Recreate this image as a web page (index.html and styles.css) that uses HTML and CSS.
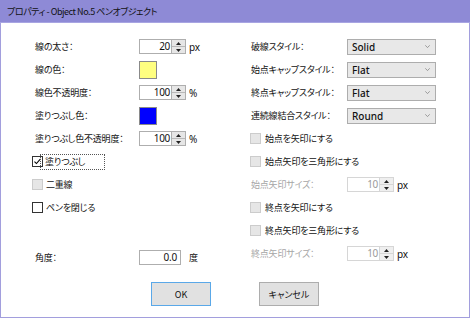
FILE: index.html
```html
<!DOCTYPE html>
<html lang="ja">
<head>
    <meta charset="UTF-8">
    <title>プロパティ - Object No.5 ペンオブジェクト</title>
    <link rel="stylesheet" href="styles.css">
</head>
<body>
<div class="window">
    <div class="titlebar">プロパティ - Object No.5 ペンオブジェクト</div>
    <div class="content">
        <div class="columns">
            <!-- 左側 -->
            <div class="col col-left">
                <div class="row">
                    <span class="label">線の太さ：</span>
                    <span class="spin"><span class="spin-value">20</span><span class="spin-btns"><span class="spin-btn"><svg viewBox="0 0 5 3"><path d="M0 3L2.5 0L5 3Z"/></svg></span><span class="spin-btn"><svg viewBox="0 0 5 3"><path d="M0 0L2.5 3L5 0Z"/></svg></span></span></span>
                    <span class="unit">px</span>
                </div>
                <div class="row">
                    <span class="label">線の色：</span>
                    <span class="swatch swatch-yellow"></span>
                </div>
                <div class="row">
                    <span class="label">線色不透明度：</span>
                    <span class="spin"><span class="spin-value">100</span><span class="spin-btns"><span class="spin-btn"><svg viewBox="0 0 5 3"><path d="M0 3L2.5 0L5 3Z"/></svg></span><span class="spin-btn"><svg viewBox="0 0 5 3"><path d="M0 0L2.5 3L5 0Z"/></svg></span></span></span>
                    <span class="unit">%</span>
                </div>
                <div class="row">
                    <span class="label">塗りつぶし色：</span>
                    <span class="swatch swatch-blue"></span>
                </div>
                <div class="row">
                    <span class="label">塗りつぶし色不透明度：</span>
                    <span class="spin"><span class="spin-value">100</span><span class="spin-btns"><span class="spin-btn"><svg viewBox="0 0 5 3"><path d="M0 3L2.5 0L5 3Z"/></svg></span><span class="spin-btn"><svg viewBox="0 0 5 3"><path d="M0 0L2.5 3L5 0Z"/></svg></span></span></span>
                    <span class="unit">%</span>
                </div>
                <div class="row check-row">
                    <span class="checkbox"><svg viewBox="0 0 11 11"><path d="M1.8 5.6L4.2 8L9.2 2.4" fill="none" stroke="#000" stroke-width="1.3"/></svg></span>
                    <span class="check-text focused">塗りつぶし</span>
                </div>
                <div class="row check-row">
                    <span class="checkbox disabled"></span>
                    <span class="check-text">二重線</span>
                </div>
                <div class="row check-row">
                    <span class="checkbox"></span>
                    <span class="check-text">ペンを閉じる</span>
                </div>
                <div class="row row-angle">
                    <span class="label">角度：</span>
                    <span class="textbox">0.0</span>
                    <span class="unit unit-wide">度</span>
                </div>
            </div>

            <!-- 右側 -->
            <div class="col col-right">
                <div class="row">
                    <span class="label">破線スタイル：</span>
                    <span class="select">Solid<svg viewBox="0 0 5 3"><path d="M0.3 0.3L2.5 2.6L4.7 0.3" fill="none" stroke="#888" stroke-width="0.8"/></svg></span>
                </div>
                <div class="row">
                    <span class="label">始点キャップスタイル：</span>
                    <span class="select">Flat<svg viewBox="0 0 5 3"><path d="M0.3 0.3L2.5 2.6L4.7 0.3" fill="none" stroke="#888" stroke-width="0.8"/></svg></span>
                </div>
                <div class="row">
                    <span class="label">終点キャップスタイル：</span>
                    <span class="select">Flat<svg viewBox="0 0 5 3"><path d="M0.3 0.3L2.5 2.6L4.7 0.3" fill="none" stroke="#888" stroke-width="0.8"/></svg></span>
                </div>
                <div class="row">
                    <span class="label">連続線結合スタイル：</span>
                    <span class="select">Round<svg viewBox="0 0 5 3"><path d="M0.3 0.3L2.5 2.6L4.7 0.3" fill="none" stroke="#888" stroke-width="0.8"/></svg></span>
                </div>
                <div class="row check-row">
                    <span class="checkbox disabled"></span>
                    <span class="check-text">始点を矢印にする</span>
                </div>
                <div class="row check-row">
                    <span class="checkbox disabled"></span>
                    <span class="check-text">始点矢印を三角形にする</span>
                </div>
                <div class="row">
                    <span class="label disabled-text">始点矢印サイズ：</span>
                    <span class="spin disabled"><span class="spin-value">10</span><span class="spin-btns"><span class="spin-btn"><svg viewBox="0 0 5 3"><path d="M0 3L2.5 0L5 3Z"/></svg></span><span class="spin-btn"><svg viewBox="0 0 5 3"><path d="M0 0L2.5 3L5 0Z"/></svg></span></span></span>
                    <span class="unit">px</span>
                </div>
                <div class="row check-row">
                    <span class="checkbox disabled"></span>
                    <span class="check-text">終点を矢印にする</span>
                </div>
                <div class="row check-row">
                    <span class="checkbox disabled"></span>
                    <span class="check-text">終点矢印を三角形にする</span>
                </div>
                <div class="row">
                    <span class="label disabled-text">終点矢印サイズ：</span>
                    <span class="spin disabled"><span class="spin-value">10</span><span class="spin-btns"><span class="spin-btn"><svg viewBox="0 0 5 3"><path d="M0 3L2.5 0L5 3Z"/></svg></span><span class="spin-btn"><svg viewBox="0 0 5 3"><path d="M0 0L2.5 3L5 0Z"/></svg></span></span></span>
                    <span class="unit">px</span>
                </div>
            </div>
        </div>

        <div class="buttons">
            <button class="btn btn-default">OK</button>
            <button class="btn">キャンセル</button>
        </div>
    </div>
</div>
</body>
</html>
```

FILE: styles.css
```css
body {
    margin: 0;
    background: #fff;
    font-family: "Noto Sans CJK JP", "Noto Sans", sans-serif;
    font-size: 9px;
    font-feature-settings: "palt";
    letter-spacing: -0.2px;
    color: #111;
}
.window {
    width: 470px;
    height: 318px;
    box-sizing: border-box;
    border: 1px solid #a29edd;
    border-top: none;
    display: flex;
    flex-direction: column;
    background: #fff;
}
.titlebar {
    height: 22px;
    margin: 0 -1px;
    padding-left: 7px;
    background: #8e8ad6;
    border-bottom: 1px solid #a8a5e2;
    display: flex;
    align-items: center;
    font-size: 9px;
    letter-spacing: -0.45px;
    color: #111;
}
.content {
    padding: 12px 0 0 34px;
}
.columns {
    display: flex;
}
.col-left {
    width: 216px;
}
.col-right {
    flex: 1;
}
.row {
    height: 23px;
    display: flex;
    align-items: center;
}
.row-angle {
    margin-top: 27px;
}
.col-left .label {
    width: 104px;
}
.col-right .label {
    width: 96px;
}
.disabled-text {
    color: #a6a6a6;
}

/* スピンボックス */
.spin {
    display: flex;
    height: 15px;
    border: 1px solid #aeaeae;
    box-sizing: border-box;
    width: 47px;
}
.spin-value {
    flex: 1;
    text-align: right;
    padding-right: 1px;
    line-height: 13px;
    font-family: "Noto Sans", sans-serif;
    font-size: 10px;
    letter-spacing: -0.3px;
}
.spin-btns {
    width: 13px;
    display: flex;
    flex-direction: column;
    border-left: 1px solid #aeaeae;
}
.spin-btn {
    flex: 1;
    background: #e6e6e6;
    display: flex;
    align-items: center;
    justify-content: center;
}
.spin-btn + .spin-btn {
    border-top: 1px solid #b8b8b8;
}
.spin-btn svg {
    width: 5px;
    height: 3px;
    fill: #222;
}
.spin.disabled {
    border-color: #d6d6d6;
}
.spin.disabled .spin-value {
    color: #9a9a9a;
}
.spin.disabled .spin-btns {
    border-left-color: #d6d6d6;
}
.spin.disabled .spin-btn {
    background: #efefef;
}
.spin.disabled .spin-btn + .spin-btn {
    border-top-color: #d6d6d6;
}
.unit {
    margin-left: 3px;
    font-family: "Noto Sans", sans-serif;
    font-size: 10px;
}
.unit-wide {
    margin-left: 8px;
    font-family: "Noto Sans CJK JP", sans-serif;
    font-size: 9px;
}

/* 色見本 */
.swatch {
    width: 18px;
    height: 18px;
    box-sizing: border-box;
    border: 1px solid #8a8a8a;
}
.swatch-yellow {
    background: #ffff80;
}
.swatch-blue {
    background: #0000ff;
}

/* テキストボックス */
.textbox {
    width: 42px;
    height: 15px;
    box-sizing: border-box;
    border: 1px solid #aeaeae;
    text-align: right;
    padding-right: 3px;
    line-height: 13px;
    font-family: "Noto Sans", sans-serif;
    font-size: 10px;
}

/* チェックボックス */
.check-row {
    margin-left: -3px;
}
.col-right .check-row {
    margin-left: -1px;
}
.checkbox {
    width: 11px;
    height: 11px;
    box-sizing: border-box;
    border: 1px solid #333;
    background: #fff;
    display: flex;
}
.checkbox svg {
    width: 9px;
    height: 9px;
}
.checkbox.disabled {
    border-color: #cccccc;
    background: #e6e6e6;
}
.check-text {
    margin-left: 3px;
}
.col-right .check-text {
    margin-left: 4px;
}
.check-text.focused {
    margin-left: -3px;
    padding-left: 4px;
    width: 59px;
    height: 14px;
    line-height: 14px;
    border: 1px dotted #555;
}

/* コンボボックス */
.select {
    width: 89px;
    height: 16px;
    box-sizing: border-box;
    border: 1px solid #adadad;
    background: #e8e8e8;
    display: flex;
    align-items: center;
    justify-content: space-between;
    padding: 0 5px 0 4px;
    font-family: "Noto Sans", sans-serif;
    font-size: 10px;
    font-weight: 500;
    letter-spacing: 0;
    color: #111;
}
.select svg {
    width: 5px;
    height: 3px;
}

/* ボタン */
.buttons {
    display: flex;
    justify-content: center;
    gap: 48px;
    margin: 13px 0 0 -34px;
}
.btn {
    width: 60px;
    height: 24px;
    box-sizing: border-box;
    border: 1px solid #adadad;
    background: #e1e1e1;
    font-family: "Noto Sans CJK JP", "Noto Sans", sans-serif;
    font-feature-settings: "palt";
    font-size: 9px;
    color: #111;
    padding: 0;
}
.btn-default {
    border-color: #5aa8e8;
}
```
